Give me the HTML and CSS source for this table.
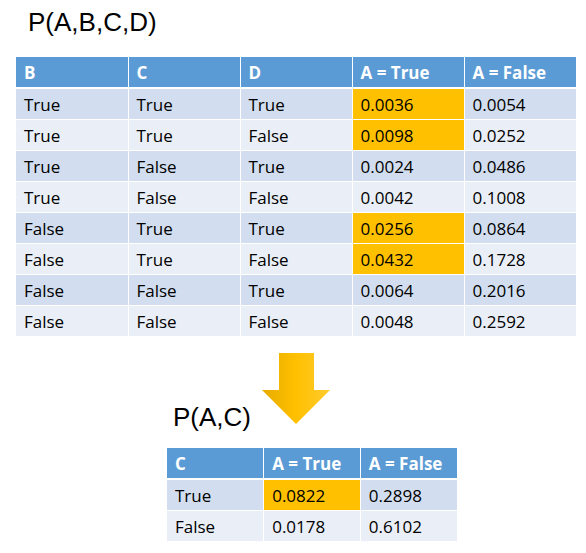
FILE: index.html
```html
<!DOCTYPE html>
<html>
<head>
<meta charset="utf-8">
<link rel="stylesheet" href="styles.css">
</head>
<body>
<div class="page">
  <h1 class="title">P(A,B,C,D)</h1>
  <table class="grid big">
    <thead>
      <tr><th>B</th><th>C</th><th>D</th><th>A = True</th><th>A = False</th></tr>
    </thead>
    <tbody>
      <tr><td>True</td><td>True</td><td>True</td><td class="hl">0.0036</td><td>0.0054</td></tr>
      <tr><td>True</td><td>True</td><td>False</td><td class="hl">0.0098</td><td>0.0252</td></tr>
      <tr><td>True</td><td>False</td><td>True</td><td>0.0024</td><td>0.0486</td></tr>
      <tr><td>True</td><td>False</td><td>False</td><td>0.0042</td><td>0.1008</td></tr>
      <tr><td>False</td><td>True</td><td>True</td><td class="hl">0.0256</td><td>0.0864</td></tr>
      <tr><td>False</td><td>True</td><td>False</td><td class="hl">0.0432</td><td>0.1728</td></tr>
      <tr><td>False</td><td>False</td><td>True</td><td>0.0064</td><td>0.2016</td></tr>
      <tr><td>False</td><td>False</td><td>False</td><td>0.0048</td><td>0.2592</td></tr>
    </tbody>
  </table>
  <div class="lower">
    <div class="head-row">
      <h2 class="title sub">P(A,C)</h2>
      <svg class="arrow" width="68" height="71" viewBox="0 0 68 71">
        <defs>
          <linearGradient id="ag" x1="0" y1="0" x2="1" y2="0">
            <stop offset="0" stop-color="#E6AC00"/>
            <stop offset="0.5" stop-color="#FFC000"/>
            <stop offset="1" stop-color="#FFCB2E"/>
          </linearGradient>
        </defs>
        <path d="M17 0 H52 V37 H68 L34 71 L0 37 H17 Z" fill="url(#ag)"/>
      </svg>
    </div>
    <table class="grid small">
      <thead>
        <tr><th>C</th><th>A = True</th><th>A = False</th></tr>
      </thead>
      <tbody>
        <tr><td>True</td><td class="hl">0.0822</td><td>0.2898</td></tr>
        <tr><td>False</td><td>0.0178</td><td>0.6102</td></tr>
      </tbody>
    </table>
  </div>
</div>
</body>
</html>
```

FILE: styles.css
```css
html, body {
  margin: 0;
  padding: 0;
  background: #ffffff;
}

.page {
  padding: 7px 0 0 16px;
}

.title {
  margin: 0 0 20px 12px;
  font-family: "Liberation Sans", Arial, sans-serif;
  font-weight: normal;
  font-size: 26px;
  line-height: 30px;
  color: #000000;
}

.grid {
  border-collapse: collapse;
  table-layout: fixed;
  font-family: "Open Sans", "Noto Sans", sans-serif;
  font-size: 17px;
  color: #000000;
}

.grid.big {
  width: 560px;
}

.grid th,
.grid td {
  height: 30px;
  padding: 0 0 0 8px;
  text-align: left;
  vertical-align: middle;
  white-space: nowrap;
}

.grid th + th,
.grid td + td {
  border-left: 1px solid #ffffff;
}

.grid th {
  background: #5B9BD5;
  color: #ffffff;
  font-weight: bold;
  border-bottom: 2px solid #ffffff;
}

.grid tbody tr + tr td {
  border-top: 1px solid #ffffff;
}

.grid tbody tr:nth-child(odd) td {
  background: #D2DEEF;
}

.grid tbody tr:nth-child(even) td {
  background: #EAEFF7;
}

.grid tbody tr td.hl {
  background: #FFC000;
}

.lower {
  padding: 17px 0 0 151px;
}

.head-row {
  display: flex;
  align-items: flex-start;
}

.title.sub {
  margin: 49px 11px 0 6px;
}

.arrow {
  display: block;
  flex: none;
}

.grid.small {
  width: 290px;
  margin-top: 16px;
}
```
